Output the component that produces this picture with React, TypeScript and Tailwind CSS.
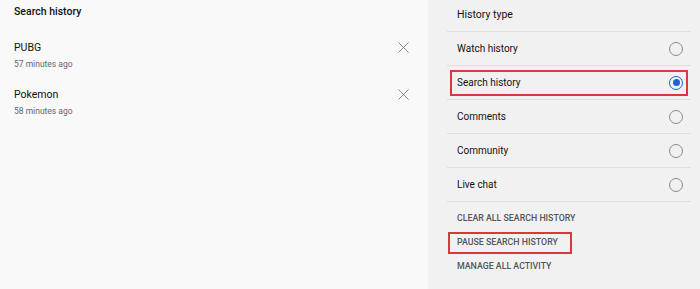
import React from 'react';
import { X } from 'lucide-react';

const searches = [
  { term: 'PUBG', when: '57 minutes ago' },
  { term: 'Pokemon', when: '58 minutes ago' },
];

const historyTypes = [
  { label: 'Watch history', selected: false },
  { label: 'Search history', selected: true },
  { label: 'Comments', selected: false },
  { label: 'Community', selected: false },
  { label: 'Live chat', selected: false },
];

const actions = [
  { label: 'CLEAR ALL SEARCH HISTORY', highlighted: false },
  { label: 'PAUSE SEARCH HISTORY', highlighted: true },
  { label: 'MANAGE ALL ACTIVITY', highlighted: false },
];

function Radio({ checked }: { checked: boolean }) {
  if (checked) {
    return (
      <span className="flex h-[14px] w-[14px] items-center justify-center rounded-full border-[1.5px] border-[#1a62d6]">
        <span className="h-[7px] w-[7px] rounded-full bg-[#1a62d6]" />
      </span>
    );
  }
  return <span className="h-[14px] w-[14px] rounded-full border border-[#8a8a8a]" />;
}

export default function App() {
  return (
    <div
      className="flex h-[289px] w-[700px] overflow-hidden bg-[#f1f1f1] text-[#111]"
      style={{ fontFamily: 'Roboto, "Liberation Sans", Arial, sans-serif' }}
    >
      {/* search history list */}
      <div className="w-[428px] shrink-0 bg-[#f9f9f9] pl-[14px] pr-[15px]">
        <div className="flex h-[24px] items-center text-[10.5px] font-medium leading-none">Search history</div>
        <div className="mt-[17px] flex flex-col gap-[18px]">
          {searches.map((s) => (
            <div key={s.term} className="flex items-start justify-between">
              <div className="flex flex-col">
                <span className="text-[10.5px] leading-[14px]">{s.term}</span>
                <span className="mt-[3px] text-[8.5px] leading-[12px] text-[#666]">{s.when}</span>
              </div>
              <X className="-mt-[3px] h-[19px] w-[19px] text-[#777]" strokeWidth={1.1} />
            </div>
          ))}
        </div>
      </div>

      {/* history type panel */}
      <div className="flex-1 pl-[19px] pr-[9px]">
        <div className="flex h-[31px] items-center pl-[10px] text-[10.5px] leading-none">History type</div>
        {historyTypes.map((t) => (
          <div key={t.label} className="flex h-[34px] items-center border-t border-[#dedede]">
            <div
              className={`mx-[3px] flex h-[26px] flex-1 items-center justify-between border-2 pl-[5px] pr-[3px] text-[10px] ${
                t.selected ? 'border-[#d9383f]' : 'border-transparent'
              }`}
            >
              <span>{t.label}</span>
              <Radio checked={t.selected} />
            </div>
          </div>
        ))}
        <div className="flex flex-col border-t border-[#dedede] pt-[5px]">
          {actions.map((a) => (
            <div key={a.label} className="flex h-[24px] items-center">
              <span
                className={`ml-[1px] flex h-[22px] items-center border-2 pl-[7px] pr-[12px] text-[8.8px] font-medium text-[#555] ${
                  a.highlighted ? 'border-[#d9383f]' : 'border-transparent'
                }`}
              >
                {a.label}
              </span>
            </div>
          ))}
        </div>
      </div>
    </div>
  );
}
